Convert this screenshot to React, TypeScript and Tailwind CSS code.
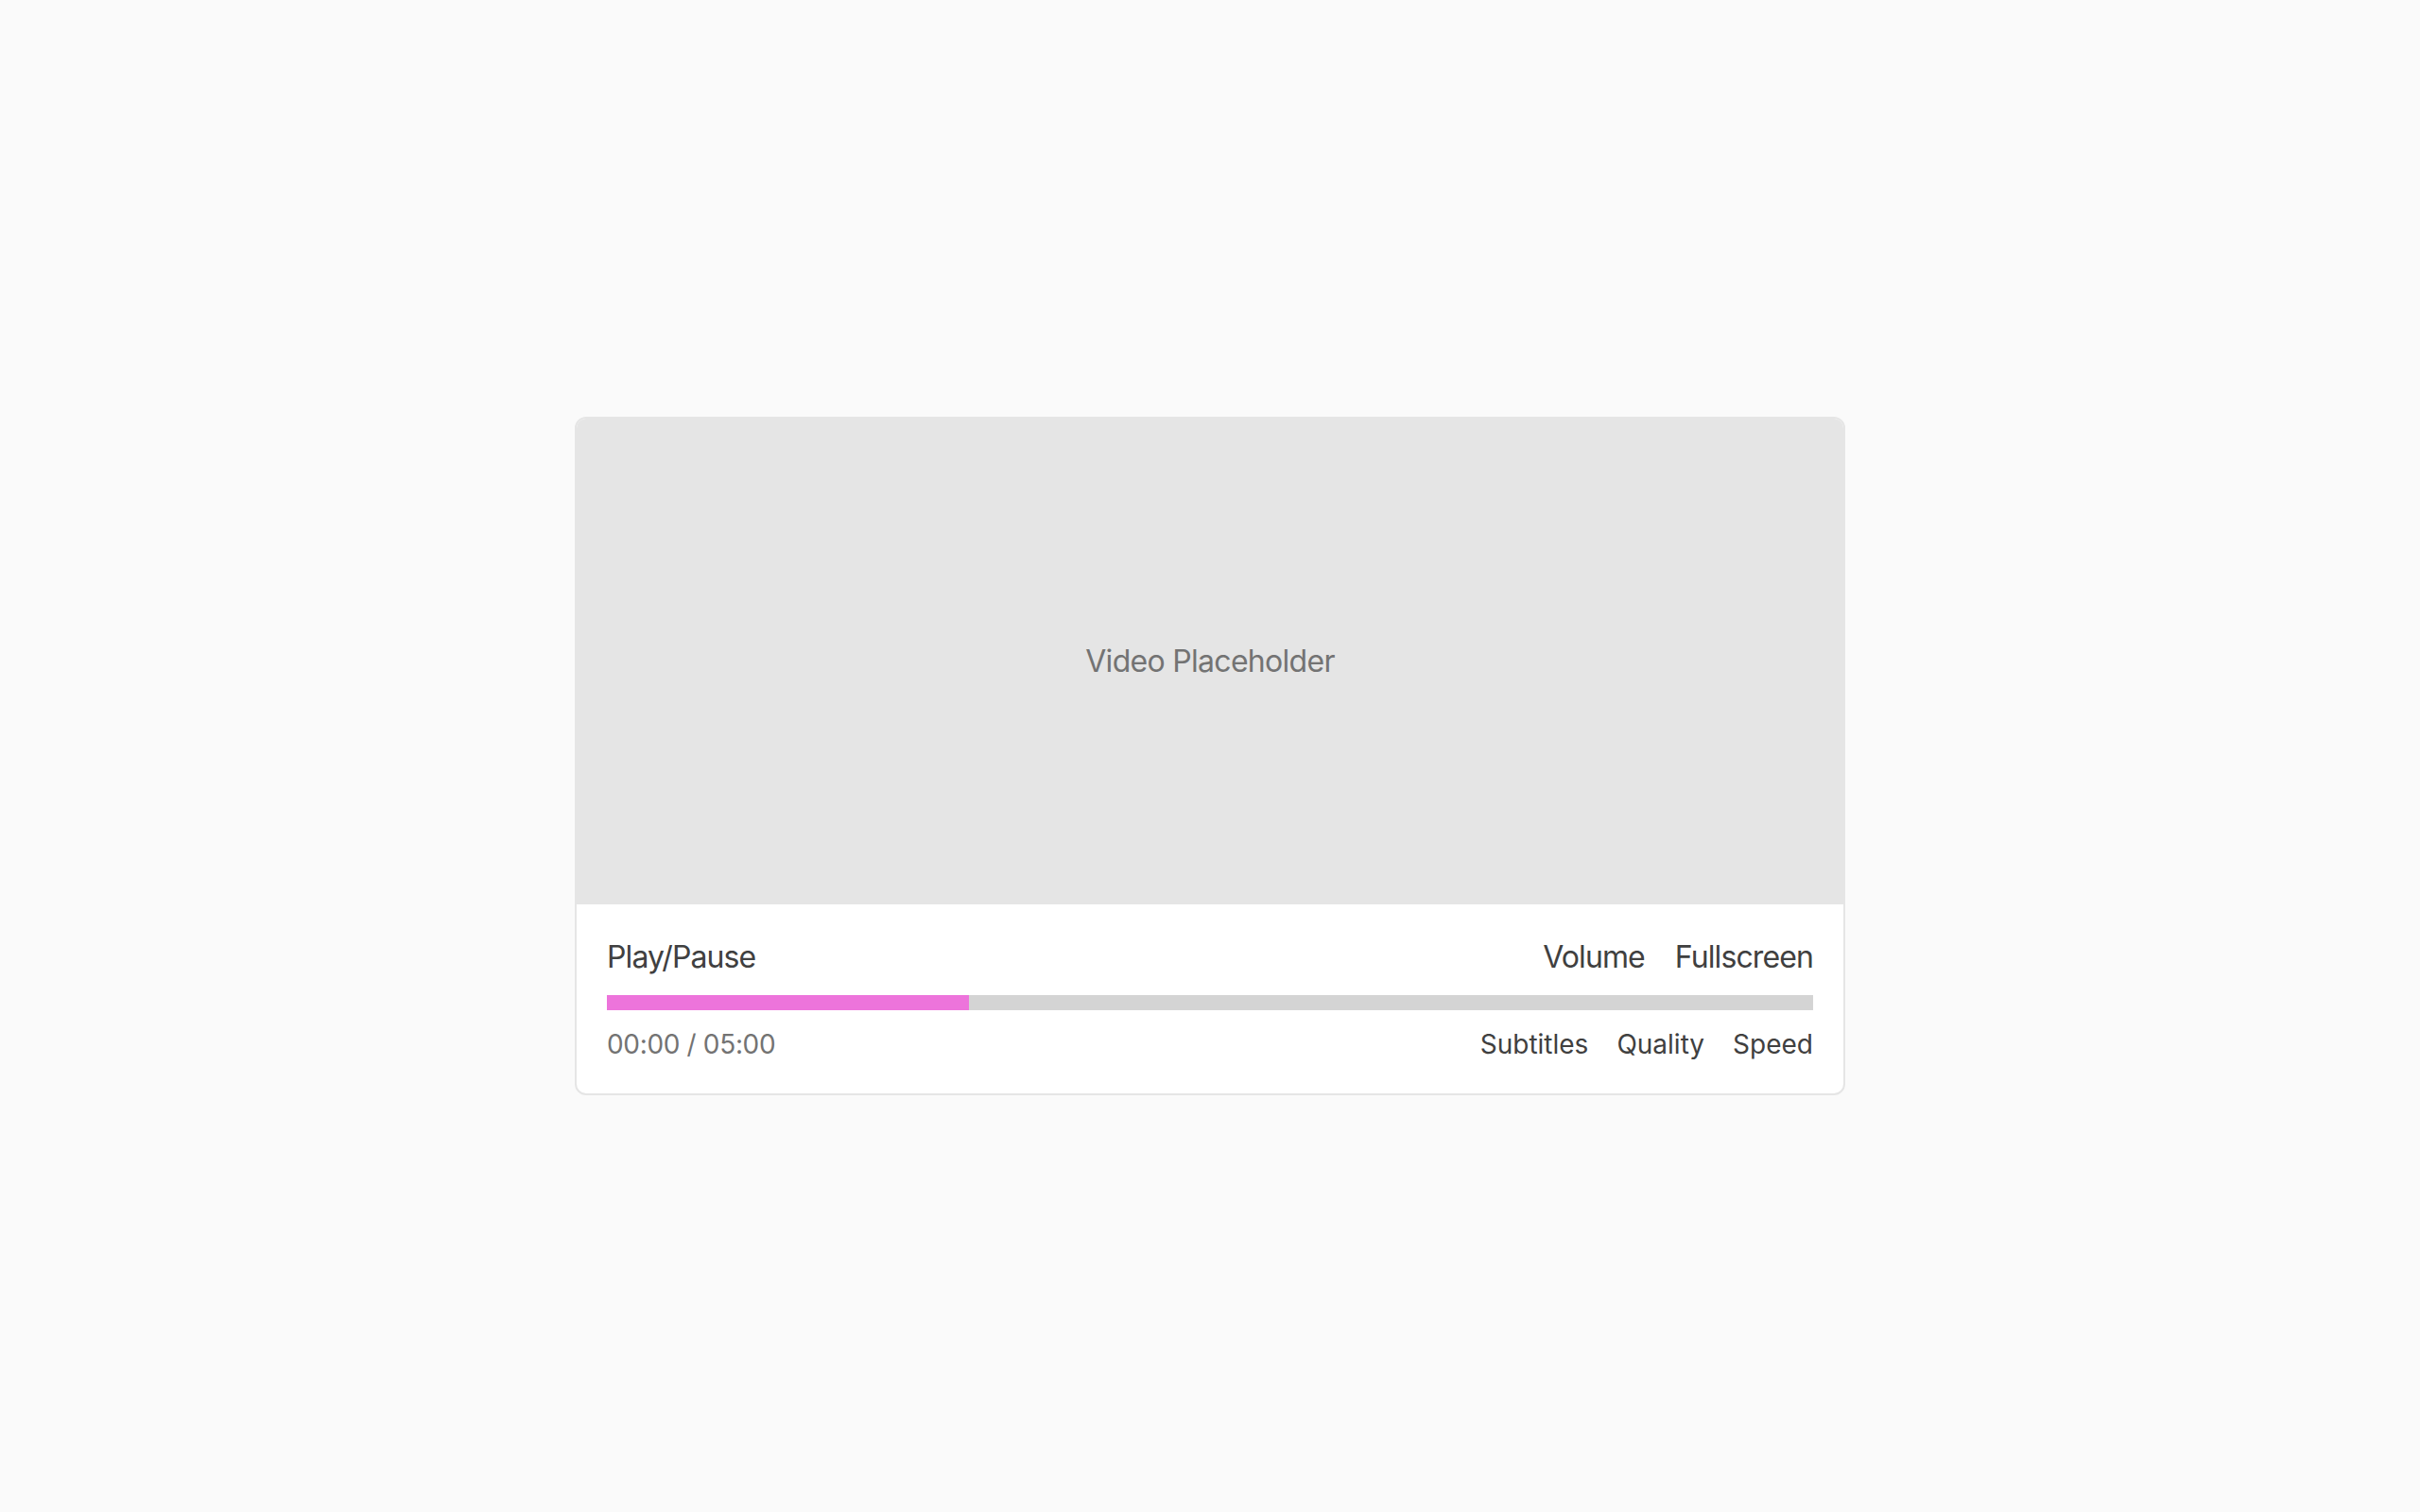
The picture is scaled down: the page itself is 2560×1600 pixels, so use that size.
import React from "react";

export default function App() {
  const progress = 30; // percent watched

  return (
    <div
      className="min-h-screen w-full bg-[#fafafa] flex items-center justify-center"
      style={{ fontFamily: "Inter, 'Noto Sans', sans-serif" }}
    >
      <div className="w-[1344px] bg-white border-2 border-[#e5e5e5] rounded-[12px] overflow-hidden">
        {/* video area */}
        <div className="h-[514px] bg-[#e5e5e5] flex items-center justify-center">
          <span className="text-[32px] leading-[48px] tracking-[-0.022em] text-[#737373]">Video Placeholder</span>
        </div>

        {/* controls */}
        <div className="p-8 flex flex-col gap-4">
          <div className="flex items-center justify-between text-[32px] leading-[48px] tracking-[-0.028em] text-[#404040]">
            <button>Play/Pause</button>
            <div className="flex gap-8">
              <button>Volume</button>
              <button>Fullscreen</button>
            </div>
          </div>

          <div className="h-4 w-full bg-[#d4d4d4]">
            <div className="h-full bg-[#ed74db]" style={{ width: `${progress}%` }}></div>
          </div>

          <div className="flex items-center justify-between text-[28px] leading-[40px]">
            <span className="text-[#737373] tracking-[-0.012em]">00:00 / 05:00</span>
            <div className="flex gap-[30px] text-[#404040]">
              <button>Subtitles</button>
              <button>Quality</button>
              <button>Speed</button>
            </div>
          </div>
        </div>
      </div>
    </div>
  );
}
